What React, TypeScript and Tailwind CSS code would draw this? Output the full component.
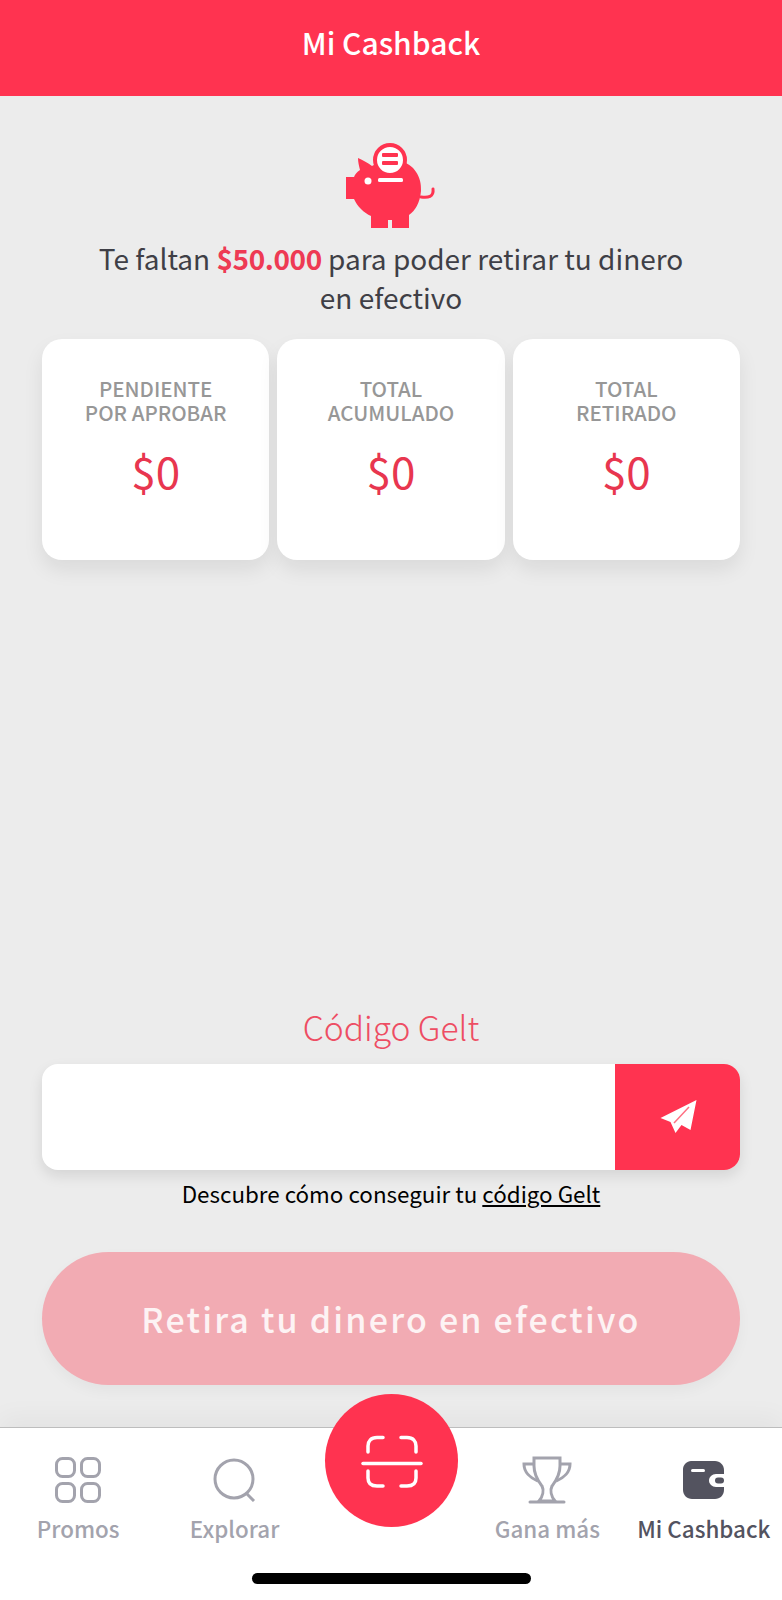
const font = { fontFamily: '"Noto Sans CJK JP", "Open Sans", sans-serif' };

const stats = [
  { top: "PENDIENTE", bottom: "POR APROBAR" },
  { top: "TOTAL", bottom: "ACUMULADO" },
  { top: "TOTAL", bottom: "RETIRADO" },
];

function PiggyIcon() {
  return (
    <svg width="90" height="86" viewBox="0 0 90 86" fill="none">
      <path
        d="M12 15 C17 17 22 20 26 23 C34 18 44 16 54 18 C68 21 76 34 75 48 C74 60 69 68 63 72 L63 85 L46 85 L46 77 L42 77 L42 85 L25 85 L25 73 C18 70 11 63 8 56 L0 56 L0 34 L8 34 C9 31 11 29 14 27 C13 23 12 19 12 15 Z"
        fill="#ff3350"
      />
      <path d="M75 54 C82 55 88 54 87 46" stroke="#ff3350" strokeWidth="3" strokeLinecap="round" />
      <circle cx="44" cy="17" r="15" fill="#fff" stroke="#ff3350" strokeWidth="4" />
      <rect x="36" y="10" width="16" height="4" fill="#ff3350" rx="1" />
      <rect x="36" y="18" width="16" height="4" fill="#ff3350" rx="1" />
      <circle cx="22" cy="38" r="3.5" fill="#fff" />
      <rect x="32" y="35" width="25" height="4" rx="1.5" fill="#fff" />
    </svg>
  );
}

function PlaneIcon() {
  return (
    <svg width="38" height="38" viewBox="0 0 38 38">
      <path d="M37.5 2 L1.5 20 L11.5 24 L16.5 35 L22.5 27 L31.5 32 Z" fill="#fff" />
      <path d="M30 9 L15 25" stroke="#ff6f82" strokeWidth="1.5" />
    </svg>
  );
}

function GridIcon() {
  return (
    <svg width="46" height="46" viewBox="0 0 46 46" fill="none" stroke="#a3a3ad" strokeWidth="3">
      <rect x="1.5" y="1.5" width="18" height="18" rx="6" />
      <rect x="26.5" y="1.5" width="18" height="18" rx="6" />
      <rect x="1.5" y="26.5" width="18" height="18" rx="6" />
      <rect x="26.5" y="26.5" width="18" height="18" rx="6" />
    </svg>
  );
}

function SearchIcon() {
  return (
    <svg width="44" height="44" viewBox="0 0 44 44" fill="none" stroke="#a3a3ad" strokeWidth="3">
      <circle cx="21" cy="21" r="19" />
      <path d="M33 35 L41 43" />
    </svg>
  );
}

function TrophyIcon() {
  return (
    <svg width="50" height="48" viewBox="0 0 50 48" fill="none" stroke="#a3a3ad" strokeWidth="3">
      <path d="M12 2 L38 2 L38 10 C38 20 33 26 30 30 C28 34 29 40 33 45 L17 45 C21 40 22 34 20 30 C17 26 12 20 12 10 Z" />
      <path d="M12 8 L2 8 C2 16 8 22 16 25" />
      <path d="M38 8 L48 8 C48 16 42 22 34 25" />
      <path d="M8 46 L42 46" strokeLinecap="round" />
    </svg>
  );
}

function WalletIcon() {
  return (
    <svg width="42" height="38" viewBox="0 0 42 38">
      <path
        d="M8 0 L32 0 C37 0 41 4 41 9 L41 29 C41 34 37 38 32 38 L9 38 C4 38 0 34 0 29 L0 8 C0 4 4 0 8 0 Z"
        fill="#53535f"
      />
      <rect x="8" y="8" width="14" height="3" rx="1.5" fill="#fff" />
      <path d="M41 13 L33 13 C29 13 26 16 26 19.5 C26 23 29 26 33 26 L41 26 Z" fill="#fff" />
      <rect x="32" y="16.5" width="9" height="6" rx="3" fill="#53535f" />
    </svg>
  );
}

function ScanIcon() {
  return (
    <svg width="62" height="54" viewBox="0 0 62 54" fill="none" stroke="#fff" strokeWidth="3.5" strokeLinecap="round">
      <path d="M22 3.5 L16 3.5 C10 3.5 7 7 7 12 L7 18" />
      <path d="M40 3.5 L46 3.5 C52 3.5 55 7 55 12 L55 18" />
      <path d="M2 29.5 L60 29.5" />
      <path d="M7 37 L7 44 C7 49 10 52 16 52 L22 52" />
      <path d="M55 37 L55 44 C55 49 52 52 46 52 L40 52" />
    </svg>
  );
}

function NavItem({ icon, label, active }: { icon: React.ReactNode; label: string; active?: boolean }) {
  return (
    <div className="flex flex-col items-center">
      <div className="h-[50px] flex items-center justify-center">{icon}</div>
      <span
        className={`mt-[7px] text-[22.4px] leading-[32px] font-medium whitespace-nowrap ${
          active ? "text-[#53535f]" : "text-[#a3a3ad]"
        }`}
      >
        {label}
      </span>
    </div>
  );
}

export default function App() {
  return (
    <div className="relative flex flex-col h-[1600px] w-[782px] overflow-hidden bg-[#ececec]" style={font}>
      <header className="h-[96px] shrink-0 flex items-center justify-center pb-[12px] bg-[#ff3350]">
        <h1 className="text-[30px] font-medium text-white">Mi Cashback</h1>
      </header>

      <main className="flex-1 min-h-0 flex flex-col px-[42px]">
        <div className="mt-[47px] flex justify-center">
          <PiggyIcon />
        </div>
        <p className="mt-[10px] text-center text-[28px] leading-[39px] text-[#3f3f46]">
          Te faltan <span className="font-bold tracking-[-0.4px] text-[#ee3a54]">$50.000</span> para poder retirar tu dinero
          <br />
          en efectivo
        </p>

        <div className="mt-[22px] grid grid-cols-3 gap-2">
          {stats.map((s) => (
            <div
              key={s.bottom}
              className="h-[221px] rounded-[20px] bg-white pt-[37px] flex flex-col items-center shadow-[0_10px_20px_rgba(0,0,0,0.08)]"
            >
              <div className="text-center text-[20.5px] leading-[24px] font-medium text-[#979797]">
                {s.top}
                <br />
                {s.bottom}
              </div>
              <div className="mt-[14px] text-[44px] leading-[64px] text-[#e8364f]">$0</div>
            </div>
          ))}
        </div>

        <div className="mt-auto text-center text-[33.6px] leading-[46px] font-light text-[#ee4d63]">Código Gelt</div>
        <div className="mt-[14px] h-[106px] flex rounded-[16px] overflow-hidden bg-white shadow-[0_6px_14px_rgba(0,0,0,0.1)]">
          <div className="flex-1" />
          <div className="w-[125px] flex items-center justify-center bg-[#ff3350]">
            <PlaneIcon />
          </div>
        </div>
        <p className="mt-[7px] text-center text-[22.4px] leading-[32px] text-black">
          Descubre cómo conseguir tu <span className="underline">código Gelt</span>
        </p>
        <div className="mt-[43px] mb-[42px] h-[133px] rounded-full flex items-center justify-center bg-[#f2abb3] shadow-[0_6px_14px_rgba(0,0,0,0.04)]">
          <span className="text-[34px] font-medium tracking-[2.2px] text-[#fdf3f4]">Retira tu dinero en efectivo</span>
        </div>
      </main>

      <nav className="relative h-[173px] shrink-0 bg-white border-t border-[#bdbdbd] shadow-[0_-10px_24px_rgba(0,0,0,0.04)]">
        <div className="grid grid-cols-5 pt-[27px]">
          <NavItem icon={<GridIcon />} label="Promos" />
          <NavItem icon={<SearchIcon />} label="Explorar" />
          <div />
          <NavItem icon={<TrophyIcon />} label="Gana más" />
          <NavItem icon={<WalletIcon />} label="Mi Cashback" active />
        </div>
        <div className="absolute left-[252px] top-[145px] h-[11px] w-[279px] rounded-full bg-black" />
      </nav>

      <button className="absolute left-[325px] top-[1394px] h-[133px] w-[133px] rounded-full flex items-center justify-center bg-[#ff3350]">
        <ScanIcon />
      </button>
    </div>
  );
}
